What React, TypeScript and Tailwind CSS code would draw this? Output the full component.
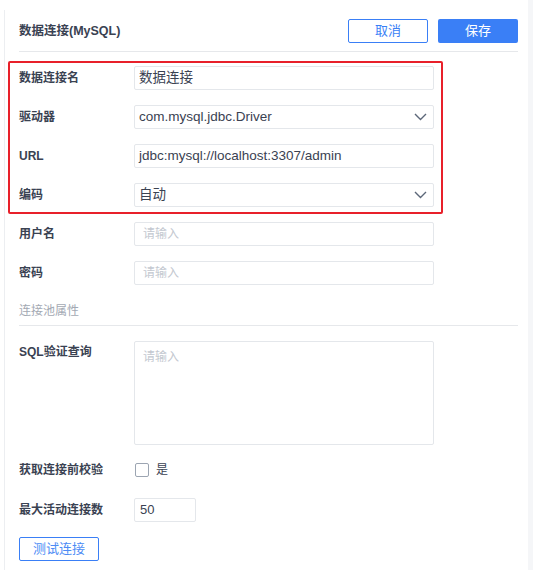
const font = { fontFamily: '"Liberation Sans", "Noto Sans CJK SC", sans-serif' };

function Label({ children }: { children: React.ReactNode }) {
	return <div className="w-[115px] shrink-0 text-[12px] font-semibold text-[#3a4252]">{children}</div>;
}

function Chevron() {
	return (
		<svg width="13" height="8" viewBox="0 0 13 8" className="mr-[1px]">
			<polyline points="1,1 6.5,6.5 12,1" fill="none" stroke="#5c6779" strokeWidth="1.4" />
		</svg>
	);
}

function Field({ value, placeholder, select }: { value?: string; placeholder?: string; select?: boolean }) {
	return (
		<div className="flex h-[24px] w-[300px] items-center justify-between rounded-[2px] border border-[#e4e7eb] bg-white pl-[4px] pr-[5px]">
			{value ? (
				<span className="text-[13.5px] text-[#3a4252]">{value}</span>
			) : (
				<span className="pl-[4px] text-[12px] text-[#c3c8d0]">{placeholder}</span>
			)}
			{select && <Chevron />}
		</div>
	);
}

function Row({ label, children, className = "" }: { label: string; children: React.ReactNode; className?: string }) {
	return (
		<div className={`flex h-[24px] items-center ${className}`}>
			<Label>{label}</Label>
			{children}
		</div>
	);
}

export default function App() {
	return (
		<div className="relative flex h-[570px] w-[533px] bg-white" style={font}>
			<div className="ml-[4px] mt-[10px] flex-1 border-l border-[#eceef1] pl-[14px] pr-[10px]">
				<div className="flex items-center justify-between border-b border-[#e6e8eb] pb-[8px] pt-[9px]">
					<div className="text-[12.5px] font-bold text-[#3a4252]">数据连接(MySQL)</div>
					<div className="flex gap-[10px]">
						<button className="h-[24px] w-[80px] rounded-[2px] border border-[#3a7ff6] text-[13px] text-[#3a7ff6]">取消</button>
						<button className="h-[24px] w-[80px] rounded-[2px] bg-[#3a7ff6] text-[13px] text-white">保存</button>
					</div>
				</div>

				<div className="mt-[14px] flex flex-col gap-[15px]">
					<Row label="数据连接名">
						<Field value="数据连接" />
					</Row>
					<Row label="驱动器">
						<Field value="com.mysql.jdbc.Driver" select />
					</Row>
					<Row label="URL">
						<Field value="jdbc:mysql://localhost:3307/admin" />
					</Row>
					<Row label="编码">
						<Field value="自动" select />
					</Row>
					<Row label="用户名">
						<Field placeholder="请输入" />
					</Row>
					<Row label="密码">
						<Field placeholder="请输入" />
					</Row>
				</div>

				<div className="mt-[17px] border-b border-[#e6e8eb] pb-[5px] text-[12px] text-[#a3a9b3]">连接池属性</div>

				<div className="mt-[15px] flex">
					<div className="pt-[2px]">
						<Label>SQL验证查询</Label>
					</div>
					<div className="h-[104px] w-[300px] rounded-[2px] border border-[#e4e7eb] px-[8px] py-[6px] text-[12px] text-[#c3c8d0]">
						请输入
					</div>
				</div>

				<Row label="获取连接前校验" className="mt-[13px]">
					<div className="flex items-center gap-[7px] pl-[1px]">
						<div className="h-[14px] w-[14px] rounded-[2px] border border-[#9ca5b2]" />
						<span className="text-[12px] text-[#3a4252]">是</span>
					</div>
				</Row>

				<Row label="最大活动连接数" className="mt-[16px]">
					<div className="flex h-[24px] w-[62px] items-center rounded-[2px] border border-[#e4e7eb] pl-[5px] text-[13px] text-[#3a4252]">50</div>
				</Row>

				<button className="mt-[15px] h-[24px] w-[80px] rounded-[2px] border border-[#3a7ff6] text-[13px] text-[#4d8cf5]">测试连接</button>
			</div>
			<div className="w-[5px] bg-[#f5f6f8]" />

			<div className="absolute left-[8px] top-[61px] h-[153px] w-[435px] rounded-[2px] border-2 border-[#e8202a]" />
		</div>
	);
}
